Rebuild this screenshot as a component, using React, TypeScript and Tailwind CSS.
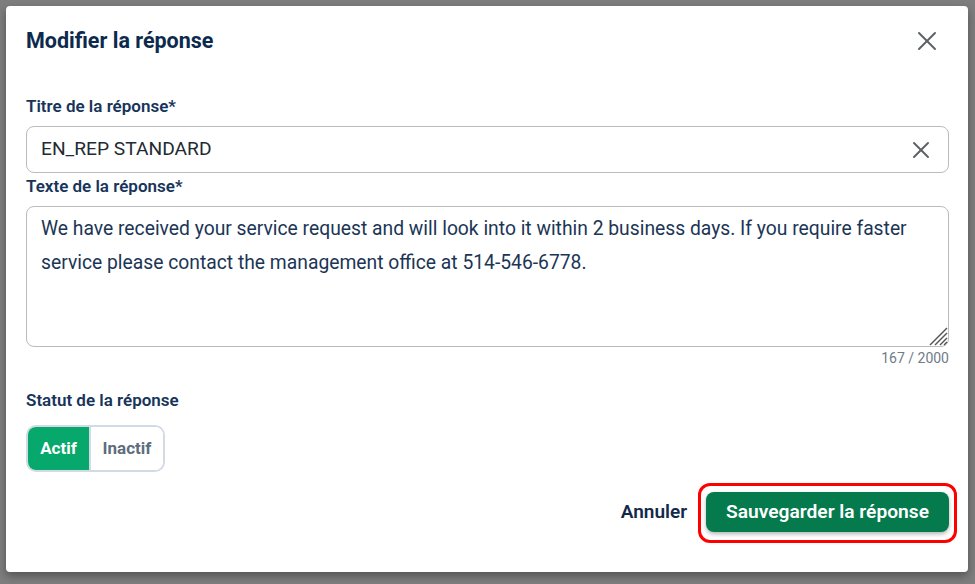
import React, { useState } from 'react';

export default function App() {
  const [status, setStatus] = useState<'actif' | 'inactif'>('actif');
  const [title, setTitle] = useState('EN_REP STANDARD');
  const [text, setText] = useState(
    'We have received your service request and will look into it within 2 business days. If you require faster service please contact the management office at 514-546-6778.'
  );

  return (
    <div className="h-[584px] w-[975px] bg-[#7e7e7e] pl-[6px] pr-[7px] pt-[6px] pb-[12px] font-['Roboto',sans-serif]">
      <div className="flex h-full flex-col rounded-[4px] bg-white pl-[20px] pr-[19px] pt-[21px] shadow-[0_4px_10px_rgba(0,0,0,0.35)]">
        {/* header */}
        <div className="flex items-center justify-between">
          <h2 className="text-[21.5px] leading-[28px] font-bold text-[#0c2a4d]">Modifier la réponse</h2>
          <button className="mr-[12px] text-[#5d6166]">
            <svg width="20" height="20" viewBox="0 0 20 20" fill="none" stroke="currentColor" strokeWidth="2" strokeLinecap="round">
              <line x1="2" y1="2" x2="18" y2="18" />
              <line x1="18" y1="2" x2="2" y2="18" />
            </svg>
          </button>
        </div>

        {/* titre */}
        <label className="mt-[39px] text-[17px] leading-[24px] font-semibold text-[#17345a]">Titre de la réponse*</label>
        <div className="mt-[8px] flex h-[47px] items-center rounded-[8px] border border-[#b9bbbf] pl-[14px] pr-[18px]">
          <input
            value={title}
            onChange={(e) => setTitle(e.target.value)}
            className="flex-1 bg-transparent text-[19.2px] text-[#222a33] outline-none"
          />
          <button onClick={() => setTitle('')} className="text-[#5d6166]">
            <svg width="18" height="18" viewBox="0 0 18 18" fill="none" stroke="currentColor" strokeWidth="2" strokeLinecap="round">
              <line x1="2" y1="2" x2="16" y2="16" />
              <line x1="16" y1="2" x2="2" y2="16" />
            </svg>
          </button>
        </div>

        {/* texte */}
        <label className="mt-[1px] text-[17px] leading-[24px] font-semibold text-[#17345a]">Texte de la réponse*</label>
        <div className="relative mt-[8px]">
          <textarea
            value={text}
            onChange={(e) => setText(e.target.value)}
            className="block h-[141px] w-full resize-none rounded-[8px] border border-[#b9bbbf] pl-[14px] pr-[20px] pt-[5px] text-[19.3px] leading-[34px] text-[#1b3556] outline-none"
          />
          <svg className="pointer-events-none absolute bottom-[1px] right-[1px]" width="22" height="22" viewBox="0 0 22 22" stroke="#555" strokeWidth="1.4">
            <line x1="21" y1="4" x2="4" y2="21" />
            <line x1="21" y1="9" x2="9" y2="21" />
            <line x1="21" y1="14" x2="14" y2="21" />
            <line x1="21" y1="18" x2="18" y2="21" />
          </svg>
        </div>
        <div className="mt-[1px] text-right text-[14px] leading-[20px] text-[#6f7b88]">{text.length} / 2000</div>

        {/* statut */}
        <label className="mt-[20px] text-[17px] leading-[24px] font-semibold text-[#17345a]">Statut de la réponse</label>
        <div className="mt-[13px] flex h-[47px] w-[139px] overflow-hidden rounded-[10px] border-2 border-[#d2dbe5]">
          <button
            onClick={() => setStatus('actif')}
            className={`w-[61px] text-[17px] font-bold ${status === 'actif' ? 'bg-[#06a86b] text-white' : 'bg-white text-[#5e6d7d]'}`}
          >
            Actif
          </button>
          <button
            onClick={() => setStatus('inactif')}
            className={`flex-1 border-l-2 border-[#d2dbe5] text-[17px] font-bold ${status === 'inactif' ? 'bg-[#06a86b] text-white' : 'bg-white text-[#5e6d7d]'}`}
          >
            Inactif
          </button>
        </div>

        {/* footer */}
        <div className="mt-[20px] flex items-center justify-end gap-[19px]">
          <button className="text-[19px] font-semibold text-[#13294b]">Annuler</button>
          <div className="relative">
            <button className="h-[40px] w-[243px] rounded-[8px] bg-[#047a4d] text-[19.2px] font-semibold text-white shadow-[0_2px_4px_rgba(0,0,0,0.3)]">
              Sauvegarder la réponse
            </button>
            {/* annotation */}
            <div className="pointer-events-none absolute -top-[9px] -bottom-[11px] -left-[8px] -right-[8px] rounded-[12px] border-[3px] border-[#ff0000]" />
          </div>
        </div>
      </div>
    </div>
  );
}
